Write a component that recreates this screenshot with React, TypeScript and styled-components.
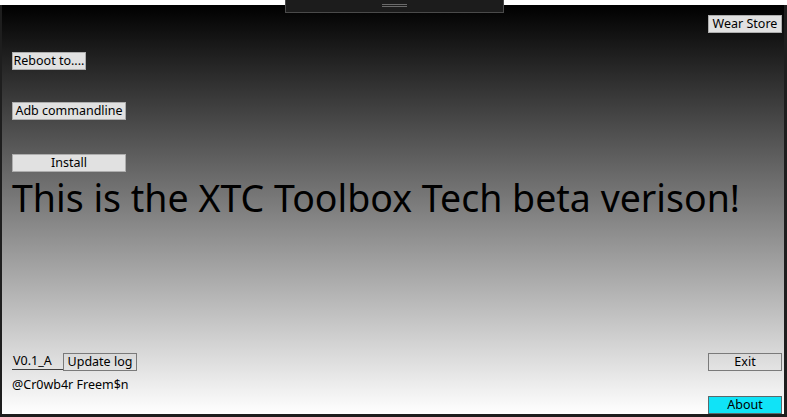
import React from "react";
import styled, { createGlobalStyle } from "styled-components";

const Global = createGlobalStyle`
  html, body { margin: 0; padding: 0; background: #ffffff; }
  body { font-family: "Noto Sans", "Open Sans", sans-serif; }
  * { box-sizing: border-box; }
`;

const Page = styled.div`
  width: 787px;
  height: 417px;
  position: relative;
  display: flex;
  flex-direction: column;
  background: #ffffff;
  overflow: hidden;
`;

const TopBand = styled.div`
  height: 5px;
  flex: none;
  background: #ffffff;
`;

const Notch = styled.div`
  position: absolute;
  left: 285px;
  top: 0;
  width: 219px;
  height: 13px;
  background: #1c1c1c;
  border: 1px solid #4a4a4a;
  border-top: none;
  display: flex;
  justify-content: center;
  align-items: flex-start;
  padding-top: 4px;
`;

const Handle = styled.div`
  width: 25px;
  height: 3px;
  border-top: 1px solid #6a6a6a;
  border-bottom: 1px solid #6a6a6a;
`;

const Window = styled.div`
  flex: 1;
  display: flex;
  flex-direction: column;
  background: linear-gradient(to bottom, #000000 0%, #7f7f7f 50%, #ffffff 100%);
  border-left: 2px solid #1e1e1e;
  border-right: 3px solid #1e1e1e;
  border-bottom: 3px solid #1e1e1e;
  padding: 10px 2px 0 10px;
`;

const HeaderRow = styled.div`
  display: flex;
  justify-content: flex-end;
`;

const Button = styled.button<{ $w: number; $h: number; $top?: number; $variant?: "solid" | "ghost" | "accent" }>`
  width: ${(p) => p.$w}px;
  height: ${(p) => p.$h}px;
  margin: ${(p) => p.$top ?? 0}px 0 0 0;
  padding: 0;
  font-family: "Noto Sans", "Open Sans", sans-serif;
  font-size: 12.5px;
  line-height: 1;
  color: #000000;
  cursor: pointer;
  display: flex;
  align-items: center;
  justify-content: center;
  background: ${(p) =>
    p.$variant === "ghost" ? "transparent" : p.$variant === "accent" ? "#10e3f7" : "#e1e1e1"};
  border: 1px solid
    ${(p) => (p.$variant === "ghost" ? "#7a7a7a" : p.$variant === "accent" ? "#5a6a6c" : "#adadad")};
`;

const LeftStack = styled.div`
  display: flex;
  flex-direction: column;
  align-items: flex-start;
`;

const Title = styled.h1`
  margin: 0;
  font-family: "Noto Sans", "Open Sans", sans-serif;
  font-weight: 400;
  font-size: 37.5px;
  line-height: normal;
  color: #000000;
  white-space: nowrap;
`;

const Bottom = styled.div`
  margin-top: auto;
  display: flex;
  justify-content: space-between;
  align-items: flex-start;
`;

const BottomLeft = styled.div`
  display: flex;
  flex-direction: column;
  gap: 6px;
`;

const VersionRow = styled.div`
  display: flex;
  align-items: flex-start;
`;

const Version = styled.div`
  width: 51px;
  height: 17px;
  padding: 0 0 0 1px;
  font-size: 12.5px;
  line-height: 15px;
  color: #000;
  border-bottom: 1px solid #404040;
`;

const Credit = styled.div`
  font-size: 12.5px;
  line-height: 16px;
  color: #000;
`;

const BottomRight = styled.div`
  display: flex;
  flex-direction: column;
  gap: 25px;
`;

export default function App() {
  return (
    <Page>
      <Global />
      <TopBand />
      <Notch>
        <Handle />
      </Notch>
      <Window>
        <HeaderRow>
          <Button $w={74} $h={18}>Wear Store</Button>
        </HeaderRow>
        <LeftStack>
          <Button $w={74} $h={18} $top={19}>Reboot to....</Button>
          <Button $w={114} $h={18} $top={32}>Adb commandline</Button>
          <Button $w={114} $h={18} $top={34}>Install</Button>
          <Title>This is the XTC Toolbox Tech beta verison!</Title>
        </LeftStack>
        <Bottom>
          <BottomLeft>
            <VersionRow>
              <Version>V0.1_A</Version>
              <Button $w={74} $h={18} $variant="ghost">Update log</Button>
            </VersionRow>
            <Credit>@Cr0wb4r Freem$n</Credit>
          </BottomLeft>
          <BottomRight>
            <Button $w={74} $h={18} $variant="ghost">Exit</Button>
            <Button $w={74} $h={18} $variant="accent">About</Button>
          </BottomRight>
        </Bottom>
      </Window>
    </Page>
  );
}
